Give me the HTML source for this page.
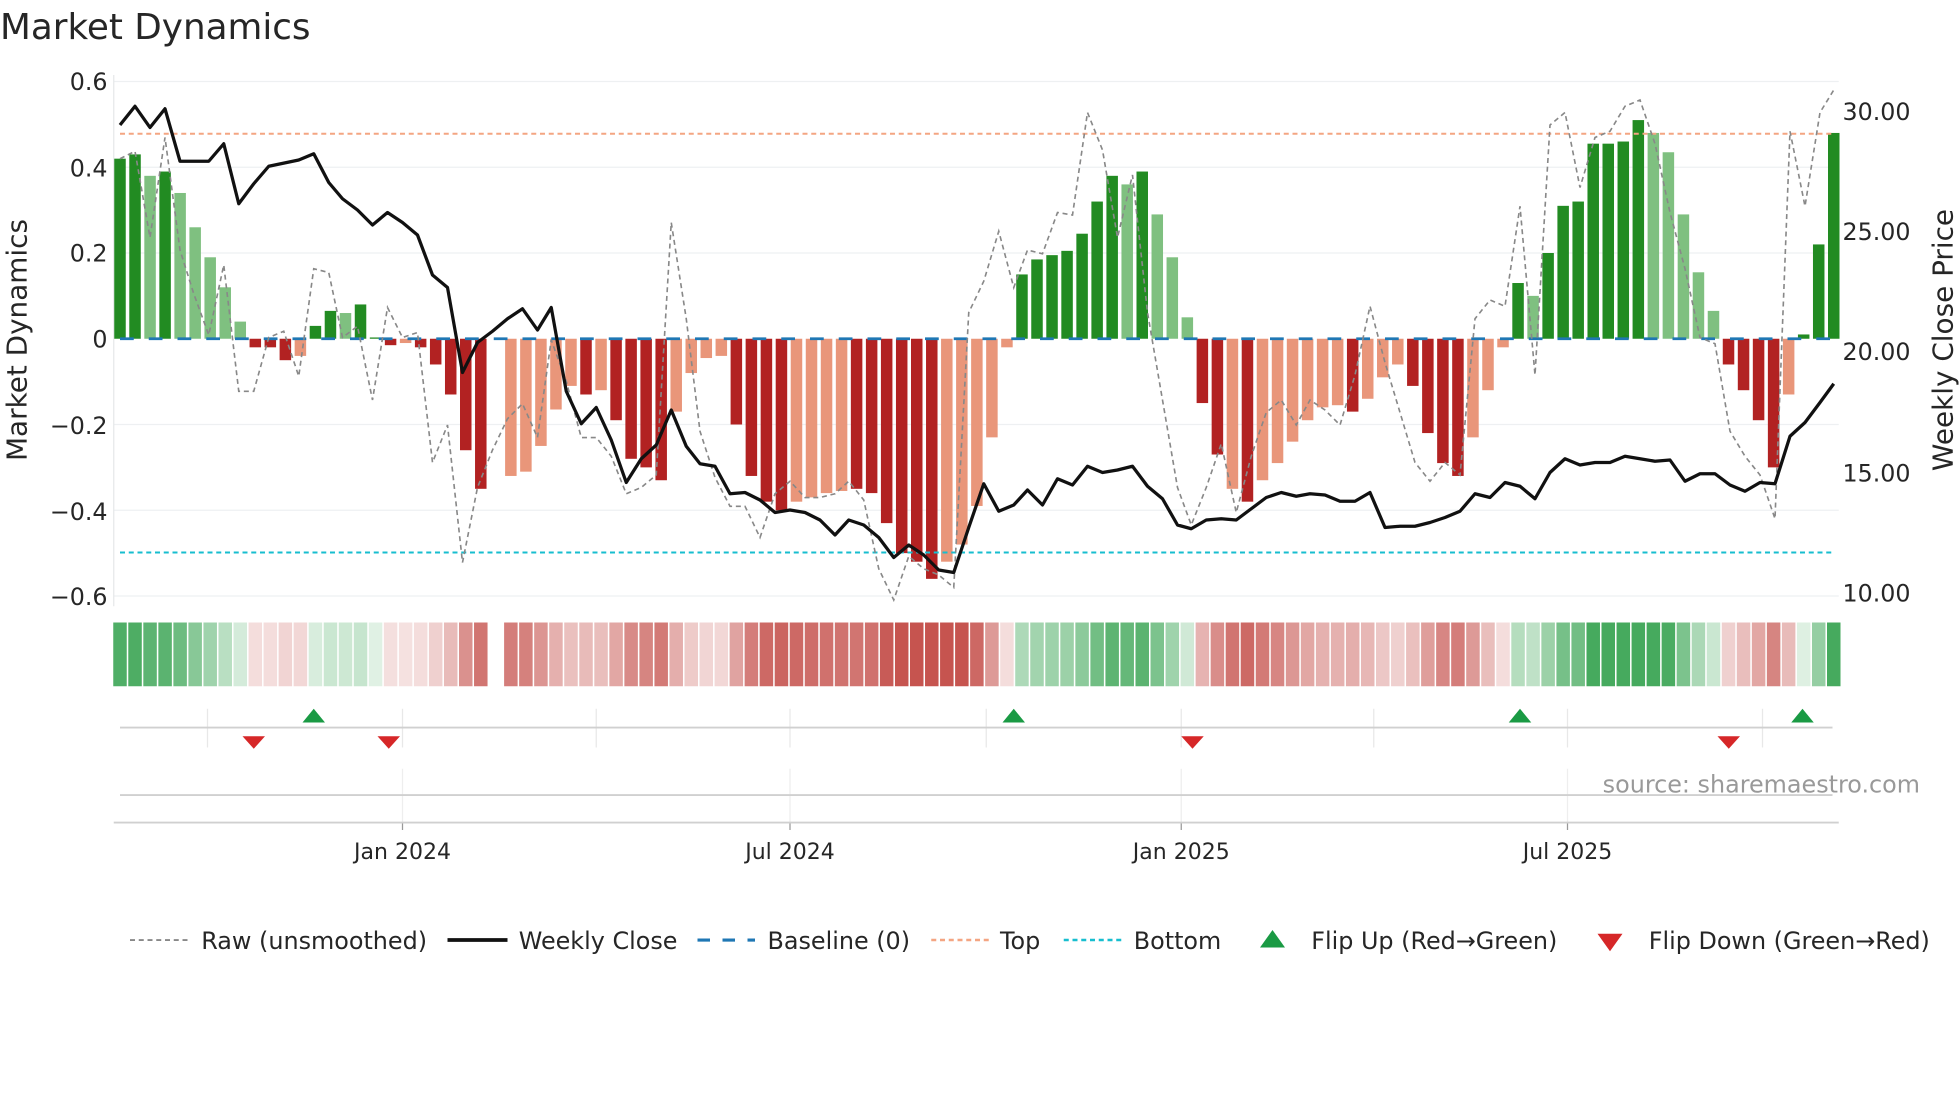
<!DOCTYPE html>
<html><head><meta charset="utf-8"><style>
html,body{margin:0;padding:0;background:#fff;width:1960px;height:1102px;overflow:hidden}
svg{display:block}
text{font-family:"DejaVu Sans","Liberation Sans",sans-serif;fill:#262626}
</style></head><body>
<svg id="s" width="1960" height="1102" viewBox="0 0 1568 881.6" xmlns="http://www.w3.org/2000/svg">
<text x="0" y="31" font-size="28.6">Market Dynamics</text>
<g id="grid"></g>
<g id="bars"></g>
<g id="heat"></g>
<g id="lines"></g>
<g font-size="19">
<text x="86" y="72" text-anchor="end">0.6</text>
<text x="86" y="141" text-anchor="end">0.4</text>
<text x="86" y="209" text-anchor="end">0.2</text>
<text x="86" y="278" text-anchor="end">0</text>
<text x="86" y="347" text-anchor="end">−0.2</text>
<text x="86" y="416" text-anchor="end">−0.4</text>
<text x="86" y="484" text-anchor="end">−0.6</text>
<text x="1474" y="96">30.00</text>
<text x="1474" y="192">25.00</text>
<text x="1474" y="288">20.00</text>
<text x="1474" y="385">15.00</text>
<text x="1474" y="481">10.00</text>
</g>
<text font-size="22.3" transform="translate(21,272) rotate(-90)" text-anchor="middle">Market Dynamics</text>
<text font-size="22.3" transform="translate(1562,272) rotate(-90)" text-anchor="middle">Weekly Close Price</text>
<g font-size="17.6">
<text x="322" y="687" text-anchor="middle">Jan 2024</text>
<text x="632" y="687" text-anchor="middle">Jul 2024</text>
<text x="945" y="687" text-anchor="middle">Jan 2025</text>
<text x="1254" y="687" text-anchor="middle">Jul 2025</text>
</g>
<text x="1536" y="634" font-size="19.1" text-anchor="end" style="fill:#999">source: sharemaestro.com</text>
<g font-size="19.1">
<line x1="104" y1="752" x2="150" y2="752" stroke="#888" stroke-width="1.5" stroke-dasharray="4,3"/>
<text x="161" y="759">Raw (unsmoothed)</text>
<line x1="358" y1="752" x2="406" y2="752" stroke="#111" stroke-width="3"/>
<text x="415" y="759">Weekly Close</text>
<line x1="558" y1="752" x2="604" y2="752" stroke="#1f77b4" stroke-width="2.5" stroke-dasharray="10,10"/>
<text x="614" y="759">Baseline (0)</text>
<line x1="745" y1="752" x2="792" y2="752" stroke="#f4a582" stroke-width="2" stroke-dasharray="4,3"/>
<text x="800" y="759">Top</text>
<line x1="851" y1="752" x2="897" y2="752" stroke="#17becf" stroke-width="2" stroke-dasharray="4,3"/>
<text x="907" y="759">Bottom</text>
<polygon points="1008,758 1028,758 1018,744" fill="#1a9a44"/>
<text x="1049" y="759">Flip Up (Red→Green)</text>
<polygon points="1278,747 1298,747 1288,761" fill="#d62728"/>
<text x="1319" y="759">Flip Down (Green→Red)</text>
</g>
</svg>
<script>
var NS="http://www.w3.org/2000/svg";
function el(p,t,a){var e=document.createElementNS(NS,t);for(var k in a)e.setAttribute(k,a[k]);document.getElementById(p).appendChild(e);return e;}
var V=[[.42,1],[.43,1],[.38,0],[.39,1],[.34,0],[.26,0],[.19,0],[.12,0],[.04,0],[-.02,1],[-.02,1],[-.05,1],[-.04,0],[.03,1],[.065,1],[.06,0],[.08,1],[0.003,1],[-.015,1],[-.01,0],[-.02,1],[-.06,1],[-.13,1],[-.26,1],[-.35,1],[0,1],[-.32,0],[-.31,0],[-.25,0],[-.165,0],[-.11,0],[-.13,1],[-.12,0],[-.19,1],[-.28,1],[-.30,1],[-.33,1],[-.17,0],[-.08,0],[-.045,0],[-.04,0],[-.2,1],[-.32,1],[-.38,1],[-.40,1],[-.38,0],[-.37,0],[-.36,0],[-.355,0],[-.35,1],[-.36,1],[-.43,1],[-.50,1],[-.52,1],[-.56,1],[-.52,0],[-.48,0],[-.39,0],[-.23,0],[-.02,0],[.15,1],[.185,1],[.195,1],[.205,1],[.245,1],[.32,1],[.38,1],[.36,0],[.39,1],[.29,0],[.19,0],[.05,0],[-.15,1],[-.27,1],[-.35,0],[-.38,1],[-.33,0],[-.29,0],[-.24,0],[-.19,0],[-.16,0],[-.155,0],[-.17,1],[-.14,0],[-.09,0],[-.06,0],[-.11,1],[-.22,1],[-.29,1],[-.32,1],[-.23,0],[-.12,0],[-.02,0],[.13,1],[.10,0],[.20,1],[.31,1],[.32,1],[.455,1],[.455,1],[.46,1],[.51,1],[.48,0],[.435,0],[.29,0],[.155,0],[.065,0],[-.06,1],[-.12,1],[-.19,1],[-.30,1],[-.13,0],[.01,1],[.22,1],[.48,1]];
var n=V.length,x0=96,dx=(1467-96)/(n-1),y0=271,k=343;
[0.6,0.4,0.2,-0.2,-0.4,-0.6].forEach(function(v){var y=y0-v*k;el("grid","line",{x1:91,x2:1471,y1:y,y2:y,stroke:"#eef0f2","stroke-width":1});});
el("grid","line",{x1:91,x2:91,y1:60,y2:485,stroke:"#e6e8ea","stroke-width":1});
[166,322,477,632,789,945,1099,1254,1410].forEach(function(x){el("grid","line",{x1:x,x2:x,y1:567,y2:598,stroke:"#e8e8e8","stroke-width":1});});
[322,632,945,1254].forEach(function(x){el("grid","line",{x1:x,x2:x,y1:615,y2:658,stroke:"#eee","stroke-width":1});el("grid","line",{x1:x,x2:x,y1:658,y2:664,stroke:"#999","stroke-width":1});});
el("grid","line",{x1:96,x2:1466,y1:582,y2:582,stroke:"#d0d0d0","stroke-width":1.5});
el("grid","line",{x1:96,x2:1466,y1:636,y2:636,stroke:"#d0d0d0","stroke-width":1.5});
el("grid","line",{x1:91,x2:1471,y1:658,y2:658,stroke:"#d0d0d0","stroke-width":1.5});
[251,811,1216,1442].forEach(function(x){el("grid","polygon",{points:(x-9)+",578 "+(x+9)+",578 "+x+",567",fill:"#1a9a44"});});
[203,311,954,1383].forEach(function(x){el("grid","polygon",{points:(x-9)+",589 "+(x+9)+",589 "+x+",599",fill:"#d62728"});});
V.forEach(function(d,i){var v=d[0],x=x0+i*dx,h=Math.abs(v)*k,c;
 if(v>=0)c=d[1]?"#228b22":"#7fc080";else c=d[1]?"#b22222":"#e9967a";
 if(h>0.3)el("bars","rect",{x:x-4.6,y:v>=0?y0-h:y0,width:9.2,height:h,fill:c});
 var a=Math.min(1,Math.abs(v)/0.45);
 if(Math.abs(v)>0.001){var col=v>0?"rgba(60,165,85,":"rgba(195,75,70,";
 el("heat","rect",{x:x-5.4,y:498,width:10.8,height:51,fill:col+(0.15+0.8*a).toFixed(2)+")"});}
});
el("lines","line",{x1:96,x2:1467,y1:107,y2:107,stroke:"#f4a582","stroke-width":1.6,"stroke-dasharray":"4,3"});
el("lines","line",{x1:96,x2:1467,y1:442,y2:442,stroke:"#17becf","stroke-width":1.6,"stroke-dasharray":"4,3"});
el("lines","line",{x1:96,x2:1467,y1:271,y2:271,stroke:"#1f77b4","stroke-width":2.2,"stroke-dasharray":"11,12"});
var raw="96,127 108,121 120,190 132,110 144,200 155,235 167,268 179,212 191,313 203,313 215,270 227,265 239,301 251,215 263,218 274,270 286,261 298,320 310,246 322,270 334,266 346,370 358,340 370,450 382,390 394,360 406,335 418,323 430,350 441,272 453,305 465,350 477,350 489,365 501,395 513,390 525,380 537,178 549,255 560,345 572,382 584,405 596,405 608,430 620,395 632,385 644,398 656,398 668,395 679,385 691,400 703,455 715,480 727,445 739,455 751,460 763,470 775,250 787,225 799,185 811,230 822,200 834,203 846,170 858,172 870,90 882,120 894,190 906,140 918,250 930,320 942,390 953,420 965,390 977,355 989,410 1001,365 1013,330 1025,320 1037,340 1048,320 1060,328 1072,340 1084,300 1096,245 1108,290 1120,330 1132,370 1144,385 1156,370 1168,380 1180,255 1192,240 1204,245 1216,165 1228,300 1240,100 1252,90 1264,150 1276,110 1288,105 1300,85 1312,80 1324,115 1336,170 1348,215 1360,270 1372,275 1384,345 1396,365 1408,380 1420,415 1432,105 1444,165 1456,90 1467,72";
el("lines","polyline",{points:raw,fill:"none",stroke:"#888","stroke-width":1.3,"stroke-dasharray":"4,3"});
var wc="96,100 108,85 120,102 132,87 144,129 167,129 179,115 191,163 203,147 215,133 239,128 251,123 263,146 274,159 286,168 298,180 310,170 322,178 334,188 346,220 358,230 370,298 382,274 394,265 406,255 418,247 430,264 441,246 453,313 465,339 477,326 489,352 501,386 513,367 525,356 537,328 549,357 560,371 572,373 584,395 596,394 608,400 620,410 632,408 644,410 656,416 668,428 679,416 691,420 703,430 715,446 727,436 739,444 751,456 763,458 775,422 787,387 799,409 811,404 822,392 834,404 846,383 858,388 870,373 882,378 894,376 906,373 918,389 930,399 942,420 953,423 965,416 977,415 989,416 1001,407 1013,398 1025,394 1037,397 1048,395 1060,396 1072,401 1084,401 1096,394 1108,422 1120,421 1132,421 1144,418 1156,414 1168,409 1180,395 1192,398 1204,386 1216,389 1228,399 1240,378 1252,367 1264,372 1276,370 1288,370 1300,365 1312,367 1324,369 1336,368 1348,385 1360,379 1372,379 1384,388 1396,393 1408,386 1420,387 1432,349 1444,338 1456,322 1467,307";
el("lines","polyline",{points:wc,fill:"none",stroke:"#111","stroke-width":2.6,"stroke-linejoin":"round"});
</script>
</body></html>
